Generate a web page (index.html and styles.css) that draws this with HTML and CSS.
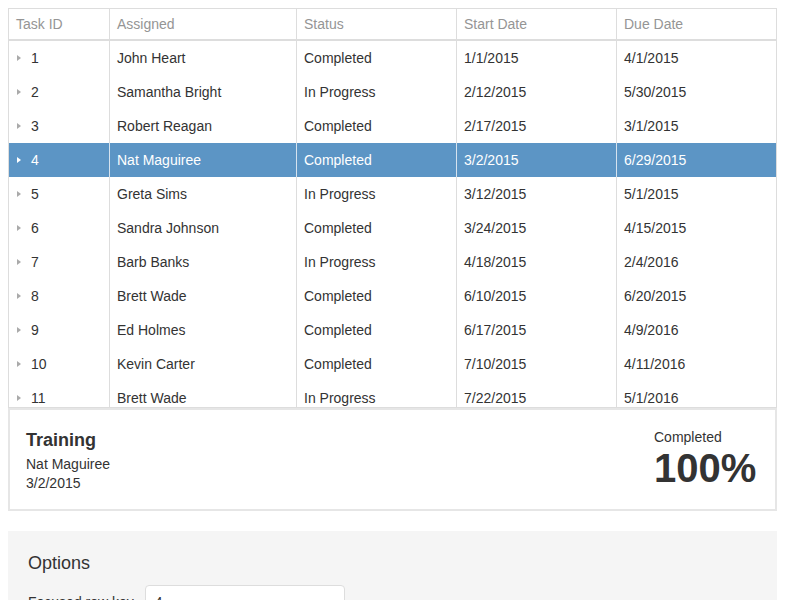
FILE: index.html
```html
<!DOCTYPE html>
<html>
<head>
<meta charset="utf-8">
<link rel="stylesheet" href="styles.css">
</head>
<body>
<div class="grid">
  <div class="row head">
    <div class="cell">Task ID</div>
    <div class="cell">Assigned</div>
    <div class="cell">Status</div>
    <div class="cell">Start Date</div>
    <div class="cell">Due Date</div>
  </div>
  <div class="body">
    <div class="row"><div class="cell"><span class="caret"></span>1</div><div class="cell">John Heart</div><div class="cell">Completed</div><div class="cell">1/1/2015</div><div class="cell">4/1/2015</div></div>
    <div class="row"><div class="cell"><span class="caret"></span>2</div><div class="cell">Samantha Bright</div><div class="cell">In Progress</div><div class="cell">2/12/2015</div><div class="cell">5/30/2015</div></div>
    <div class="row"><div class="cell"><span class="caret"></span>3</div><div class="cell">Robert Reagan</div><div class="cell">Completed</div><div class="cell">2/17/2015</div><div class="cell">3/1/2015</div></div>
    <div class="row focused"><div class="cell"><span class="caret"></span>4</div><div class="cell">Nat Maguiree</div><div class="cell">Completed</div><div class="cell">3/2/2015</div><div class="cell">6/29/2015</div></div>
    <div class="row"><div class="cell"><span class="caret"></span>5</div><div class="cell">Greta Sims</div><div class="cell">In Progress</div><div class="cell">3/12/2015</div><div class="cell">5/1/2015</div></div>
    <div class="row"><div class="cell"><span class="caret"></span>6</div><div class="cell">Sandra Johnson</div><div class="cell">Completed</div><div class="cell">3/24/2015</div><div class="cell">4/15/2015</div></div>
    <div class="row"><div class="cell"><span class="caret"></span>7</div><div class="cell">Barb Banks</div><div class="cell">In Progress</div><div class="cell">4/18/2015</div><div class="cell">2/4/2016</div></div>
    <div class="row"><div class="cell"><span class="caret"></span>8</div><div class="cell">Brett Wade</div><div class="cell">Completed</div><div class="cell">6/10/2015</div><div class="cell">6/20/2015</div></div>
    <div class="row"><div class="cell"><span class="caret"></span>9</div><div class="cell">Ed Holmes</div><div class="cell">Completed</div><div class="cell">6/17/2015</div><div class="cell">4/9/2016</div></div>
    <div class="row"><div class="cell"><span class="caret"></span>10</div><div class="cell">Kevin Carter</div><div class="cell">Completed</div><div class="cell">7/10/2015</div><div class="cell">4/11/2016</div></div>
    <div class="row"><div class="cell"><span class="caret"></span>11</div><div class="cell">Brett Wade</div><div class="cell">In Progress</div><div class="cell">7/22/2015</div><div class="cell">5/1/2016</div></div>
  </div>
</div>

<div class="task-info">
  <div class="info">
    <div class="subject">Training</div>
    <p class="details">Nat Maguiree</p>
    <p class="details">3/2/2015</p>
  </div>
  <div class="progress">
    <span class="progress-label">Completed</span>
    <span class="progress-value">100%</span>
  </div>
</div>

<div class="options">
  <div class="caption">Options</div>
  <div class="option">
    <span class="option-label">Focused row key</span>
    <div class="numberbox">4</div>
  </div>
</div>
</body>
</html>
```

FILE: styles.css
```css
body {
  margin: 8px;
  font-family: "Liberation Sans", Arial, sans-serif;
  font-size: 14px;
  color: #333;
}

.grid {
  border: 1px solid #ddd;
}

.row {
  display: grid;
  grid-template-columns: 101px 187px 160px 160px 1fr;
  height: 34px;
}

.row.head {
  height: 30px;
  border-bottom: 2px solid #ddd;
  color: #959595;
}

.cell {
  display: flex;
  align-items: center;
  padding: 0 7px;
  border-right: 1px solid #ddd;
  white-space: nowrap;
  overflow: hidden;
}

.cell:last-child {
  border-right: none;
}

.body {
  height: 366px;
  overflow: hidden;
}

.caret {
  width: 0;
  height: 0;
  border-left: 4px solid #aaa;
  border-top: 3px solid transparent;
  border-bottom: 3px solid transparent;
  margin-left: 1px;
  margin-right: 10px;
}

.row.focused {
  background: #5c95c5;
  color: #fff;
}

.row.focused .cell {
  border-right-color: #d6e3ef;
}

.row.focused .caret {
  border-left-color: #fff;
}

.task-info {
  border: 2px solid #e6e6e6;
  padding: 16px;
  display: flex;
  justify-content: space-between;
  align-items: flex-start;
}

.subject {
  font-size: 18px;
  font-weight: bold;
  line-height: 29px;
}

.details {
  margin: 0;
  font-size: 14px;
  line-height: 19px;
}

.progress {
  display: flex;
  flex-direction: column;
  min-width: 105px;
}

.progress-label {
  font-size: 14px;
  line-height: 23px;
}

.progress-value {
  font-size: 40px;
  font-weight: bold;
  line-height: 39px;
}

.options {
  margin-top: 20px;
  padding: 20px;
  background: #f5f5f5;
}

.caption {
  font-size: 18px;
  line-height: 24px;
}

.option {
  margin-top: 10px;
  display: flex;
  align-items: center;
  gap: 11px;
}

.numberbox {
  width: 200px;
  height: 34px;
  box-sizing: border-box;
  padding: 0 9px;
  border: 1px solid #ddd;
  border-radius: 4px;
  background: #fff;
  display: flex;
  align-items: center;
}
```
